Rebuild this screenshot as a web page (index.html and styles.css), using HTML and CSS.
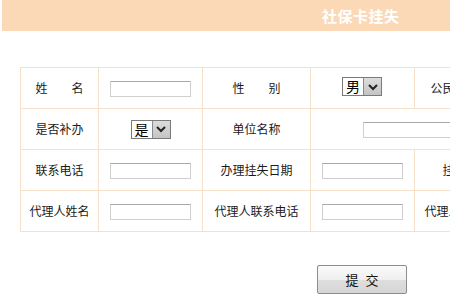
FILE: index.html
```html
<!DOCTYPE html>
<html lang="zh">
<head>
<meta charset="utf-8">
<link rel="stylesheet" href="styles.css">
</head>
<body>
<div class="header"><span class="title">社保卡挂失</span></div>
<table class="form">
  <colgroup>
    <col class="c1"><col class="c2"><col class="c3"><col class="c4"><col class="c5"><col class="c6">
  </colgroup>
  <tr>
    <td class="lbl">姓　　名</td>
    <td><span class="inp"></span></td>
    <td class="lbl">性　　别</td>
    <td><span class="sel sel-a"><span class="val">男</span><span class="arr"><svg width="12" height="8" viewBox="0 0 12 8"><path d="M2 2 L6 6 L10 2" fill="none" stroke="#222" stroke-width="2"/></svg></span></span></td>
    <td class="lbl">公民身份号码</td>
    <td><span class="inp"></span></td>
  </tr>
  <tr>
    <td class="lbl">是否补办</td>
    <td><span class="sel sel-b"><span class="val">是</span><span class="arr"><svg width="12" height="8" viewBox="0 0 12 8"><path d="M2 2 L6 6 L10 2" fill="none" stroke="#222" stroke-width="2"/></svg></span></span></td>
    <td class="lbl">单位名称</td>
    <td colspan="3" class="wide"><span class="inp inp-wide"></span></td>
  </tr>
  <tr>
    <td class="lbl">联系电话</td>
    <td><span class="inp"></span></td>
    <td class="lbl">办理挂失日期</td>
    <td><span class="inp"></span></td>
    <td class="lbl">挂失原因</td>
    <td><span class="inp"></span></td>
  </tr>
  <tr>
    <td class="lbl">代理人姓名</td>
    <td><span class="inp"></span></td>
    <td class="lbl">代理人联系电话</td>
    <td><span class="inp"></span></td>
    <td class="lbl">代理人身份证号</td>
    <td><span class="inp"></span></td>
  </tr>
</table>
<div class="actions"><button class="btn" type="button">提 交</button></div>
</body>
</html>
```

FILE: styles.css
```css
html, body {
  margin: 0;
  padding: 0;
  overflow: hidden;
  background: #fff;
  font-family: "Noto Sans CJK SC", "Noto Sans", sans-serif;
  font-size: 12px;
  color: #1a1a1a;
}
.header {
  margin-left: 2px;
  height: 31px;
  background: #fcd9b6;
  display: flex;
  align-items: center;
  padding-left: 320px;
}
.title {
  color: #fff;
  font-size: 15px;
  font-weight: bold;
  letter-spacing: 0.5px;
}
.form {
  margin: 36px 0 0 20px;
  border-collapse: collapse;
  table-layout: fixed;
  width: 606px;
}
.c1 { width: 78px; }
.c2 { width: 104px; }
.c3 { width: 108px; }
.c4 { width: 104px; }
.c5 { width: 104px; }
.c6 { width: 108px; }
.form td {
  border: 1px solid #f7e0c9;
  height: 40px;
  padding: 0;
  text-align: center;
  vertical-align: middle;
  white-space: nowrap;
  line-height: 14px;
}
.inp {
  display: inline-block;
  vertical-align: middle;
  width: 79px;
  height: 14px;
  border: 1px solid #cfcfcf;
  border-top-color: #a9a9a9;
  background: #fff;
  margin-top: 2px;
}
.inp-wide {
  width: 210px;
}
.sel {
  display: inline-flex;
  vertical-align: middle;
  height: 17px;
  border: 1px solid #7a7a7a;
  background: #fff;
  font-size: 14px;
  line-height: 17px;
}
.sel-a { margin-top: -4px; margin-left: -1px; }
.val {
  width: 20px;
  text-align: center;
  color: #000;
}
.arr {
  width: 17px;
  height: 17px;
  background: linear-gradient(#dcdcdc, #c4c4c4);
  border-left: 1px solid #8a8a8a;
  display: flex;
  align-items: center;
  justify-content: center;
}
.actions {
  padding: 33px 0 0 317px;
}
.btn {
  width: 90px;
  height: 29px;
  border: 1px solid #8c8c8c;
  border-radius: 2px;
  background: linear-gradient(#fbfbfb 0%, #efefef 50%, #dedede 51%, #d6d6d6 100%);
  font-family: "Noto Sans CJK SC", sans-serif;
  font-size: 13px;
  color: #111;
  word-spacing: 4px;
  padding: 0;
}
```
